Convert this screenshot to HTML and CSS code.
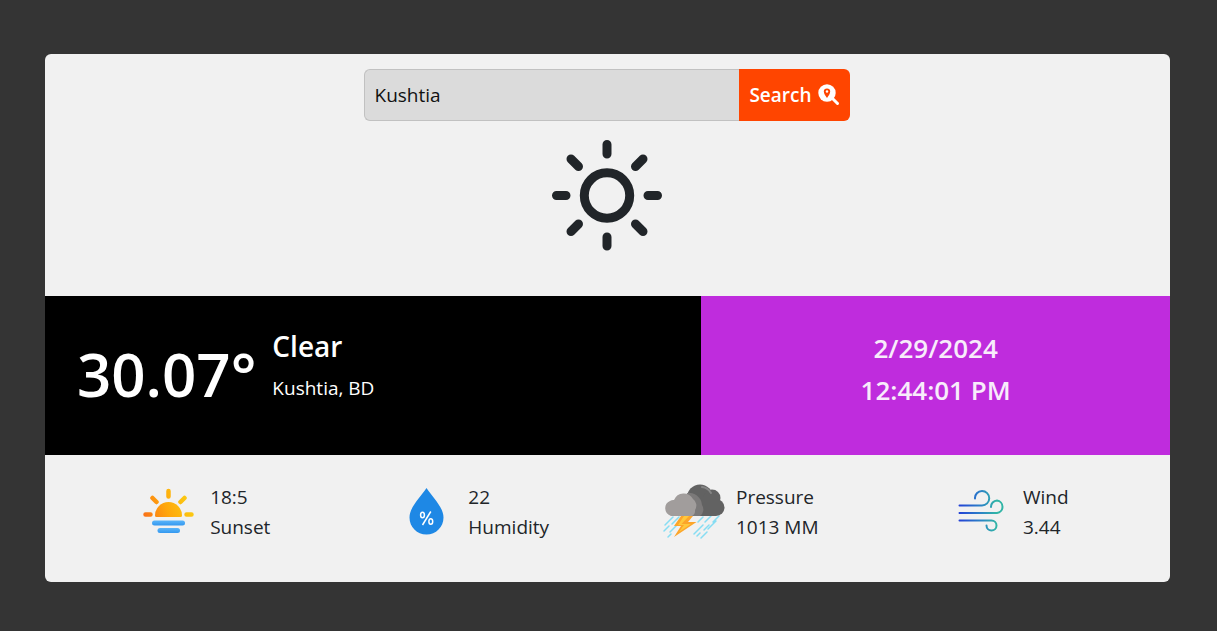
FILE: index.html
```html
<!DOCTYPE html>
<html lang="en">
<head>
<meta charset="utf-8">
<meta name="viewport" content="width=device-width, initial-scale=1">
<title>Weather</title>
<link rel="stylesheet" href="styles.css">
</head>
<body>
<main class="card">
  <section class="top">
    <form class="search">
      <input class="search-input" type="text" value="Kushtia" aria-label="City">
      <button class="search-button" type="button">Search
        <svg class="search-icon" viewBox="0 0 22 22" aria-hidden="true">
          <path d="M13.5 13.5L19.5 19.5" stroke="currentColor" stroke-width="3" stroke-linecap="round"/>
          <circle cx="9" cy="9" r="8.7" fill="currentColor"/>
          <path d="M9 14C7.4 11.8 5.8 9.7 5.8 7.6a3.2 3.2 0 0 1 6.4 0C12.2 9.7 10.6 11.8 9 14z" fill="#ff4500"/>
          <circle cx="9" cy="7.5" r="1.2" fill="currentColor"/>
        </svg>
      </button>
    </form>
    <svg class="sky-icon" viewBox="0 0 112 112" fill="none" stroke="#212529" stroke-width="9" stroke-linecap="round" aria-hidden="true">
      <circle cx="56" cy="56.5" r="22.7"/>
      <path d="M56 5.500V15M56 98V107M5.500 56.500H15M97 56.500H106.500M20 20L27.500 27.500M84.500 85L92 92.500M92 20L84.500 27.500M27.500 85L20 92.500"/>
    </svg>
  </section>
  <section class="band">
    <div class="now">
      <h1 class="temp">30.07°</h1>
      <div class="place">
        <h2 class="condition">Clear</h2>
        <p class="city">Kushtia, BD</p>
      </div>
    </div>
    <div class="clock">
      <time>2/29/2024</time>
      <time>12:44:01 PM</time>
    </div>
  </section>
  <section class="details">
    <div class="detail">
      <svg class="detail-icon" viewBox="0 0 64 64" fill="none" stroke-linecap="round" aria-hidden="true">
        <defs><linearGradient id="sun" gradientUnits="userSpaceOnUse" x1="10" y1="40" x2="52" y2="22"><stop stop-color="#f97318"/><stop offset=".5" stop-color="#ffa70c"/><stop offset="1" stop-color="#fbc912"/></linearGradient>
        <linearGradient id="water" x1="0" y1="0" x2="0" y2="1"><stop stop-color="#59b5fa"/><stop offset="1" stop-color="#3498ef"/></linearGradient></defs>
        <path d="M20.500 38a1.500 1.500 0 0 1-1.500-1.500a13.500 13.500 0 0 1 27 0a1.500 1.500 0 0 1-1.500 1.500z" fill="url(#sun)"/>
        <path d="M9.500 35.500H14.500M50.500 35.500H55.500M16.500 19L20.500 23M48.500 19L44.500 23M32.500 12V17.500" stroke="url(#sun)" stroke-width="4.500"/>
        <rect x="16" y="41.500" width="33" height="5" rx="2.500" fill="url(#water)"/>
        <rect x="21.500" y="49" width="22.500" height="5" rx="2.500" fill="url(#water)"/>
      </svg>
      <div class="detail-text"><p>18:5</p><p>Sunset</p></div>
    </div>
    <div class="detail">
      <svg class="detail-icon" viewBox="0 0 64 64" aria-hidden="true">
        <path d="M32.500 9C27 17.500 15.500 28 15.500 38.500C15.500 48 23 55.500 32.500 55.500S49.500 48 49.500 38.500C49.500 28 38 17.500 32.500 9z" fill="#1e88e5"/>
        <g fill="none" stroke="#fff" stroke-width="1.500"><ellipse cx="28.500" cy="36" rx="1.900" ry="2.800"/><ellipse cx="36.800" cy="42.500" rx="1.900" ry="2.800"/><path d="M36.800 32.500L28.500 46"/></g>
      </svg>
      <div class="detail-text"><p>22</p><p>Humidity</p></div>
    </div>
    <div class="detail">
      <svg class="detail-icon" viewBox="0 0 64 64" fill="none" aria-hidden="true">
        <defs><clipPath id="cloud"><path d="M24 37V5H64V37z"/></clipPath></defs>
        <path d="M11 38L3 46M17 38L10 45M7 47L2 52M15 46L8 53M9 55L6 58M41 38L36 43M49 37L43 43M57 37L51 43M41 46L32 55M47 46L42 51M54 42L46 50M38 54L35 57M45 53L39 59" stroke="#86ddf3" stroke-width="1.500" stroke-linecap="round"/>
        <g clip-path="url(#cloud)" fill="#626262"><circle cx="38" cy="18.500" r="13"/><circle cx="50" cy="19" r="8.500"/><circle cx="54" cy="28.500" r="8.500"/><path d="M25 18H54V37H25z"/></g>
        <path d="M40 8a12 12 0 0 1 9 6" stroke="#858585" stroke-width="2" stroke-linecap="round"/>
        <path d="M25 14a13 13 0 0 1 15 12a8 8 0 0 1-2 11H29z" fill="#7b7979"/>
        <path d="M9 37a8 8 0 0 1-1-15a6 6 0 0 1 4-1a10.500 10.500 0 0 1 19-1a8 8 0 0 1 2 11a6 6 0 0 1-3 6z" fill="#a19d9c"/>
        <path d="M19 37H31L26 43H34.500L12 58L19 47H12z" fill="#fca52b"/>
        <path d="M22 37H27L19.500 45H29L17 53L22 46H16z" fill="#ffc83d"/>
      </svg>
      <div class="detail-text"><p>Pressure</p><p>1013 MM</p></div>
    </div>
    <div class="detail">
      <svg class="detail-icon" viewBox="0 0 64 64" fill="none" stroke="url(#air)" stroke-width="2" stroke-linecap="round" aria-hidden="true">
        <defs><linearGradient id="air" gradientUnits="userSpaceOnUse" x1="10" y1="0" x2="54" y2="0"><stop stop-color="#2341d6"/><stop offset=".5" stop-color="#2b83c6"/><stop offset=".85" stop-color="#31b5a6"/><stop offset="1" stop-color="#31b5a6"/></linearGradient></defs>
        <path d="M10.500 26.500H33a7 7 0 0 0 0-14.500a7 7 0 0 0-7 7.500M10.500 34H48a6.300 6.300 0 0 0 0-12.500a6.300 6.300 0 0 0-6 6.500M10.500 41.500H42.500a5 5 0 0 1 0 10a5 5 0 0 1-5-5"/>
      </svg>
      <div class="detail-text"><p>Wind</p><p>3.44</p></div>
    </div>
  </section>
</main>
</body>
</html>
```
FILE: styles.css
```css
* { box-sizing: border-box; }
body {
  margin: 0;
  padding: 54px 47px 48px 45px;
  background: #343434;
  color: #212529;
  font: 400 19px/30px "Segoe UI", "Open Sans", "Noto Sans", sans-serif;
}
h1, h2, p { margin: 0; font-weight: inherit; }
.card { overflow: hidden; border-radius: 6px; background: #f1f1f1; }
.top {
  display: flex;
  flex-direction: column;
  align-items: center;
  gap: 18px;
  padding: 15px 18px 45px 16px;
}
.search { display: flex; width: 100%; max-width: 486px; }
.search-input {
  flex: 1;
  min-width: 0;
  height: 52px;
  padding: 0 10px;
  border: 1px solid #c1c1c1;
  border-right: 0;
  border-radius: 6px 0 0 6px;
  background: #dbdbdb;
  color: #111;
  font: inherit;
}
.search-button {
  display: flex;
  align-items: center;
  gap: 6px;
  padding: 0 10px;
  border: 0;
  border-radius: 0 6px 6px 0;
  background: #ff4500;
  color: #fff;
  font: inherit;
  font-weight: 600;
}
.search-icon { width: 22px; height: 22px; fill: none; }
.sky-icon { width: 112px; height: 112px; }
.band { display: grid; grid-template-columns: 7fr 5fr; color: #fff; }
.now {
  display: flex;
  align-items: center;
  gap: 16px;
  padding: 29px 32px 31px;
  background: #000;
}
.temp { font-size: 60px; line-height: 99px; font-weight: 600; }
.place { align-self: flex-start; }
.condition { font-size: 28px; line-height: 42px; font-weight: 600; }
.city { line-height: 42px; font-size: 19px; }
.clock {
  display: flex;
  flex-direction: column;
  align-items: center;
  padding: 31px 16px;
  background: #bf2cdd;
  color: #f8ecfb;
  font-size: 26px;
  line-height: 42px;
  font-weight: 600;
}
.details {
  display: grid;
  grid-template-columns: repeat(4, 1fr);
  padding: 24px 27px 39px 24px;
}
.detail { display: flex; justify-content: center; align-items: flex-start; gap: 10px; }
.detail-icon { width: 64px; height: 64px; }
.detail-text { padding-top: 3px; }
```
